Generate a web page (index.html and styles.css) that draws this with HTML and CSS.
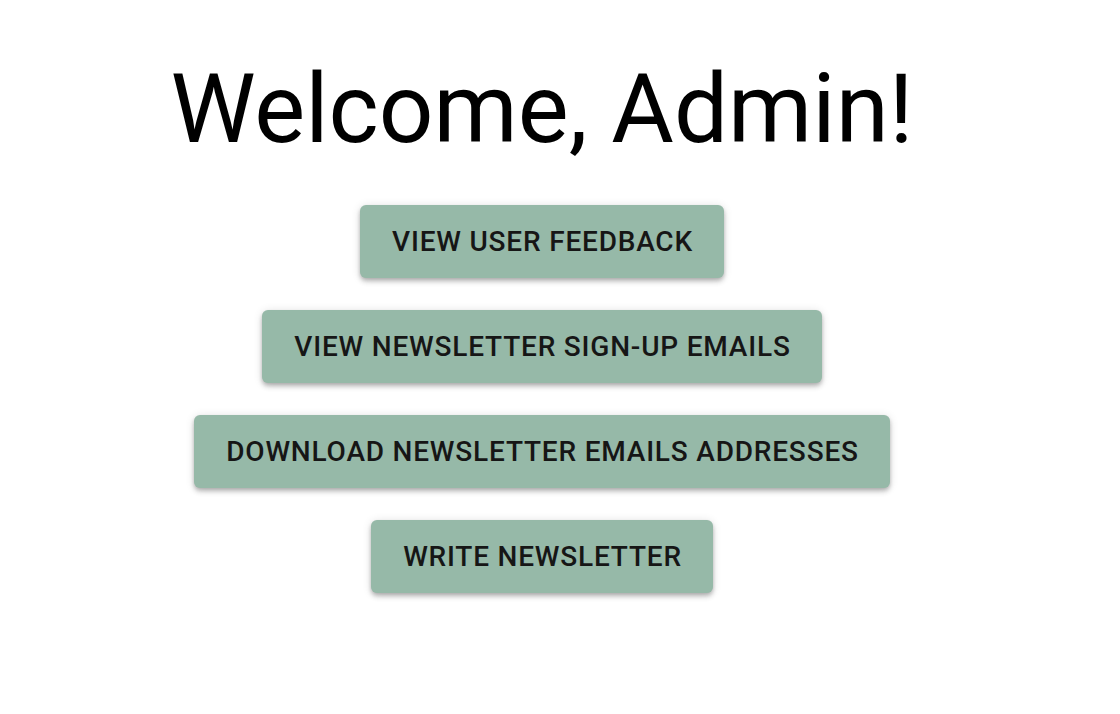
FILE: index.html
```html
<!DOCTYPE html>
<html>
<head>
<meta charset="utf-8">
<link rel="stylesheet" href="styles.css">
</head>
<body>
<main class="page">
  <h1 class="title">Welcome, Admin!</h1>
  <div class="actions">
    <button class="btn">View User Feedback</button>
    <button class="btn">View Newsletter Sign-Up Emails</button>
    <button class="btn">Download Newsletter Emails Addresses</button>
    <button class="btn">Write Newsletter</button>
  </div>
</main>
</body>
</html>
```
FILE: styles.css
```css
html, body {
  margin: 0;
  padding: 0;
  background: #ffffff;
}
body {
  font-family: Roboto, "Liberation Sans", sans-serif;
}
.page {
  width: 1084px;
  display: flex;
  flex-direction: column;
  align-items: center;
  padding-top: 61px;
  padding-bottom: 60px;
}
.title {
  margin: 0;
  font-size: 96px;
  font-weight: 400;
  line-height: 1;
  color: #000;
  letter-spacing: 0;
}
.actions {
  margin-top: 48px;
  display: flex;
  flex-direction: column;
  align-items: center;
  gap: 32px;
}
.btn {
  font-family: Roboto, "Liberation Sans", sans-serif;
  font-size: 28px;
  font-weight: 500;
  text-transform: uppercase;
  letter-spacing: 0.8px;
  color: #161616;
  background: #96b9a8;
  border: none;
  border-radius: 6px;
  height: 73px;
  padding: 0 31px 0 32px;
  box-shadow: 0 2px 4px -1px rgba(0,0,0,0.2), 0 4px 5px 0 rgba(0,0,0,0.14), 0 1px 10px 0 rgba(0,0,0,0.12);
  cursor: pointer;
}
```
